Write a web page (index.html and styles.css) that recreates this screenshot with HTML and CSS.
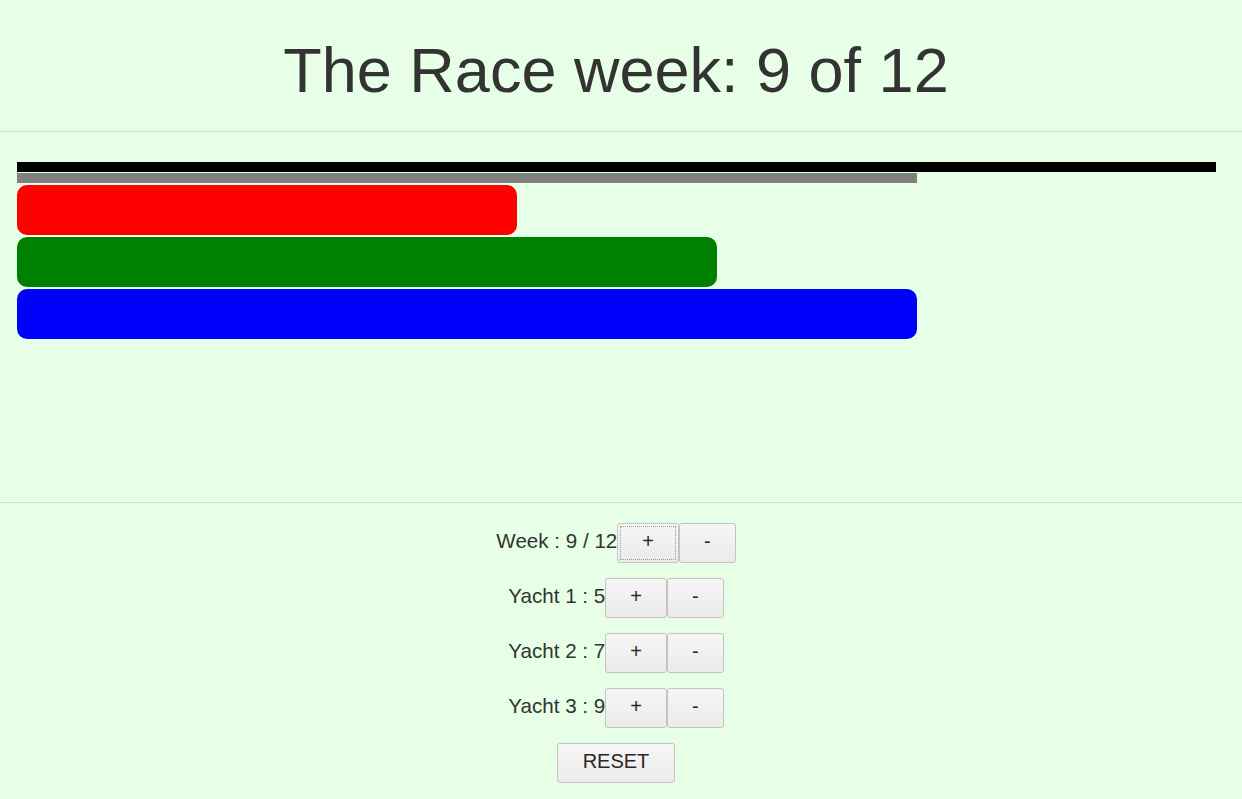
FILE: index.html
```html
<!DOCTYPE html>
<html>
<head>
<meta charset="utf-8">
<title>The Race</title>
<link rel="stylesheet" href="styles.css">
</head>
<body>
<header class="header">
  <h1 class="title">The Race week: 9 of 12</h1>
</header>
<section class="track">
  <div class="bar bar-total" style="width:1199px"></div>
  <div class="bar bar-week" style="width:900px"></div>
  <div class="bar yacht yacht-1" style="width:500px"></div>
  <div class="bar yacht yacht-2" style="width:700px"></div>
  <div class="bar yacht yacht-3" style="width:900px"></div>
</section>
<section class="controls">
  <div class="row"><span class="label">Week : 9 / 12</span><button class="btn focused">+</button><button class="btn">-</button></div>
  <div class="row"><span class="label">Yacht 1 : 5</span><button class="btn">+</button><button class="btn">-</button></div>
  <div class="row"><span class="label">Yacht 2 : 7</span><button class="btn">+</button><button class="btn">-</button></div>
  <div class="row"><span class="label">Yacht 3 : 9</span><button class="btn">+</button><button class="btn">-</button></div>
  <div class="row"><button class="btn reset">RESET</button></div>
</section>
</body>
</html>
```
FILE: styles.css
```css
html, body {
  margin: 0;
  padding: 0;
  background: #e6ffe6;
  font-family: "Liberation Sans", Arial, sans-serif;
  color: #333;
}

.header {
  border-bottom: 1px solid #cfdccf;
}

.title {
  margin: 0;
  padding: 33px 10px 24px 0;
  font-size: 63px;
  line-height: 74px;
  font-weight: normal;
  text-align: center;
  color: #333;
}

.track {
  box-sizing: border-box;
  height: 371px;
  padding: 30px 17px 0;
  border-bottom: 1px solid #cfdccf;
  display: flex;
  flex-direction: column;
  align-items: flex-start;
}

.bar {
  height: 10px;
}

.bar-total {
  background: #000;
}

.bar-week {
  margin-top: 1px;
  background: #808080;
}

.yacht {
  height: 50px;
  margin-top: 2px;
  border-radius: 10px;
}

.yacht-1 { background: #ff0000; }
.yacht-2 { background: #008000; }
.yacht-3 { background: #0000ff; }

.controls {
  padding: 20px 10px 0 0;
  display: flex;
  flex-direction: column;
  align-items: center;
  gap: 15px;
}

.row {
  display: flex;
  align-items: baseline;
  justify-content: center;
}

.label {
  font-size: 20.6px;
  color: #333;
}

.btn {
  box-sizing: border-box;
  height: 40px;
  padding: 0 24px 3px;
  margin: 0;
  border: 1px solid #c8c2bd;
  border-radius: 3px;
  background: linear-gradient(#f6f6f6, #ebebeb);
  font-family: "Liberation Sans", Arial, sans-serif;
  font-size: 20px;
  color: #2f2525;
  cursor: pointer;
}

.focused {
  outline: 1px dotted #999;
  outline-offset: -4px;
}

.btn.reset {
  padding: 0 25px 3px;
}
```
